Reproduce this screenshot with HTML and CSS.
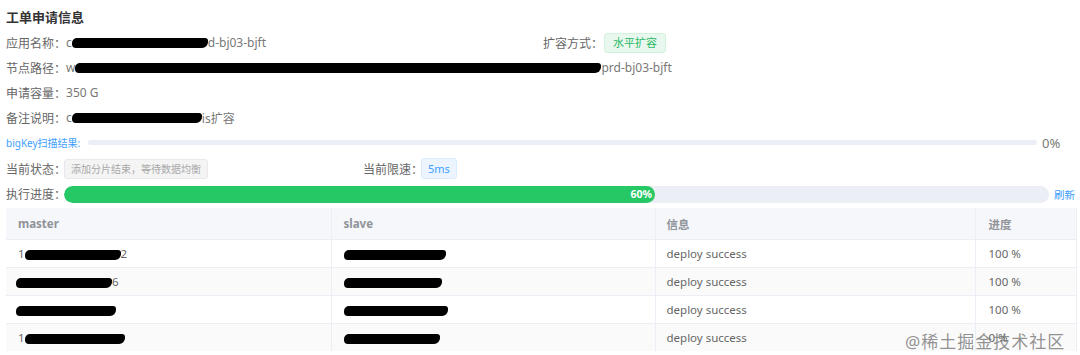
FILE: index.html
```html
<!DOCTYPE html>
<html lang="zh-CN">
<head>
    <meta charset="UTF-8">
    <meta name="viewport" content="width=device-width, initial-scale=1.0">
    <title>工单申请信息</title>
    <link rel="stylesheet" href="styles.css">
</head>
<body>
    <div class="page">
        <h2 class="title">工单申请信息</h2>

        <div class="info-row split">
            <div class="item">
                <span class="label">应用名称：</span>
                <span class="value">c<span class="ink" style="width:136px"></span>d-bj03-bjft</span>
            </div>
            <div class="item">
                <span class="label">扩容方式：</span>
                <span class="tag tag-green">水平扩容</span>
            </div>
        </div>
        <div class="info-row">
            <span class="label">节点路径：</span>
            <span class="value">w<span class="ink" style="width:526px"></span>prd-bj03-bjft</span>
        </div>
        <div class="info-row">
            <span class="label">申请容量：</span>
            <span class="value">350 G</span>
        </div>
        <div class="info-row">
            <span class="label">备注说明：</span>
            <span class="value">c<span class="ink" style="width:130px"></span>is扩容</span>
        </div>

        <div class="info-row bigkey">
            <span class="label blue">bigKey扫描结果:</span>
            <div class="track"></div>
            <span class="pct">0%</span>
        </div>

        <div class="info-row status split2">
            <div class="item">
                <span class="label">当前状态：</span>
                <span class="tag tag-gray">添加分片结束，等待数据均衡</span>
            </div>
            <div class="item">
                <span class="label">当前限速：</span>
                <span class="tag tag-blue">5ms</span>
            </div>
        </div>

        <div class="info-row progress-row">
            <span class="label">执行进度：</span>
            <div class="bar">
                <div class="bar-fill" style="width:60%"><span>60%</span></div>
            </div>
            <a class="refresh">刷新</a>
        </div>

        <table class="grid">
            <colgroup>
                <col style="width:325px">
                <col style="width:324px">
                <col style="width:320px">
                <col>
            </colgroup>
            <thead>
                <tr><th>master</th><th>slave</th><th>信息</th><th>进度</th></tr>
            </thead>
            <tbody>
                <tr>
                    <td>1<span class="ink" style="width:96px"></span>2</td>
                    <td><span class="ink" style="width:102px"></span></td>
                    <td>deploy success</td>
                    <td>100 %</td>
                </tr>
                <tr>
                    <td><span class="ink ink-l" style="width:96px"></span>6</td>
                    <td><span class="ink" style="width:98px"></span></td>
                    <td>deploy success</td>
                    <td>100 %</td>
                </tr>
                <tr>
                    <td><span class="ink ink-l" style="width:100px"></span></td>
                    <td><span class="ink" style="width:104px"></span></td>
                    <td>deploy success</td>
                    <td>100 %</td>
                </tr>
                <tr>
                    <td>1<span class="ink" style="width:100px"></span></td>
                    <td><span class="ink" style="width:96px"></span></td>
                    <td>deploy success</td>
                    <td>0 %</td>
                </tr>
            </tbody>
        </table>

        <div class="watermark">@稀土掘金技术社区</div>
    </div>
</body>
</html>
```

FILE: styles.css
```css
body {
    margin: 0;
    background-color: #fff;
    font-family: "Noto Sans", "Noto Sans CJK SC", sans-serif;
    color: #666;
}
.page {
    position: relative;
    padding: 7px 4px 0 6px;
}
.title {
    margin: 0 0 3px;
    height: 20px;
    line-height: 20px;
    font-size: 13px;
    font-weight: bold;
    color: #333;
}
.info-row {
    display: flex;
    align-items: center;
    height: 25px;
    font-size: 12px;
    white-space: nowrap;
}
.split {
    display: grid;
    grid-template-columns: 537px 1fr;
}
.split2 {
    display: grid;
    grid-template-columns: 357px 1fr;
}
.item {
    display: flex;
    align-items: center;
}
.label {
    color: #666;
}
.value {
    color: #777;
    display: inline-flex;
    align-items: center;
}
.ink {
    display: inline-block;
    height: 10px;
    background: #000;
    border-radius: 5px 3px 6px 4px;
    vertical-align: middle;
}
.ink-l {
    margin-left: -2px;
}
.tag {
    display: inline-block;
    height: 20px;
    line-height: 18px;
    padding: 0 8px;
    border-radius: 3px;
    box-sizing: border-box;
    font-size: 11px;
    margin-left: -2px;
}
.tag-green {
    margin-left: 1px;
    background: #e8f8ee;
    border: 1px solid #d1f2dd;
    color: #2bb865;
}
.tag-gray {
    background: #f4f4f5;
    border: 1px solid #e9e9eb;
    color: #a8a8a8;
    font-size: 10px;
    padding: 0 6px;
}
.tag-blue {
    background: #ecf5ff;
    border: 1px solid #d9ecff;
    color: #409eff;
    padding: 0 6px;
    height: 21px;
    line-height: 19px;
}
.bigkey .label.blue {
    color: #409eff;
    font-size: 10px;
}
.track {
    flex: 1;
    height: 5px;
    margin-left: 8px;
    background: #ebeef5;
    border-radius: 3px;
}
.pct {
    width: 34px;
    margin-left: 5px;
    font-size: 13px;
    color: #777;
}
.status {
    height: 27px;
}
.progress-row {
    height: 24px;
}
.bar {
    flex: 1;
    height: 17px;
    margin-left: -2px;
    background: #ebeef5;
    border-radius: 9px;
    overflow: hidden;
}
.bar-fill {
    height: 100%;
    background: #25c865;
    border-radius: 9px;
    display: flex;
    align-items: center;
    justify-content: flex-end;
}
.bar-fill span {
    color: #fff;
    font-size: 10.5px;
    font-weight: bold;
    padding-right: 3px;
}
.refresh {
    width: 22px;
    margin-left: 5px;
    color: #409eff;
    font-size: 10.5px;
    cursor: pointer;
}
.grid {
    margin-top: 2px;
    width: 1071px;
    border-collapse: collapse;
    table-layout: fixed;
    font-size: 11.5px;
    border-right: 1px solid #e4e7ed;
}
.grid th {
    height: 31px;
    padding: 0 12px;
    text-align: left;
    background: #f5f7fa;
    color: #909399;
    font-weight: bold;
    border-right: 1px solid #ebeef5;
}
.grid td {
    height: 27px;
    padding: 0 12px;
    color: #666;
    border-top: 1px solid #ebeef5;
    border-right: 1px solid #ebeef5;
    white-space: nowrap;
}
.grid tbody tr:nth-child(even) td {
    background: #fafafa;
}
.grid th:nth-child(3), .grid td:nth-child(3) {
    padding-left: 11px;
}
.grid th:nth-child(4), .grid td:nth-child(4) {
    padding-left: 13px;
}
.watermark {
    position: absolute;
    left: 905px;
    top: 328px;
    font-size: 17px;
    color: rgba(110, 110, 110, 0.75);
    letter-spacing: 1px;
}
```
